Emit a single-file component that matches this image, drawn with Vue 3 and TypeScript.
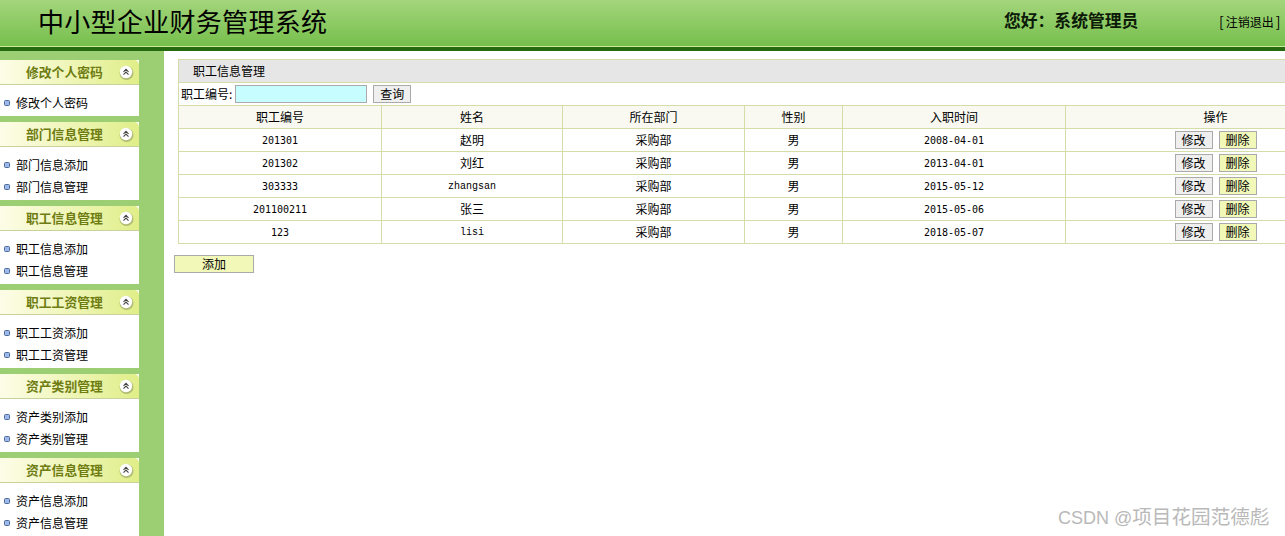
<script setup lang="ts">
import { ref } from "vue";

interface Group {
  title: string,
  items: string[],
}

interface Staff {
  id: string,
  name: string,
  dept: string,
  sex: string,
  date: string,
}

const keyword = ref("");

const groups: Group[] = [
  { title: "修改个人密码", items: ["修改个人密码"] },
  { title: "部门信息管理", items: ["部门信息添加", "部门信息管理"] },
  { title: "职工信息管理", items: ["职工信息添加", "职工信息管理"] },
  { title: "职工工资管理", items: ["职工工资添加", "职工工资管理"] },
  { title: "资产类别管理", items: ["资产类别添加", "资产类别管理"] },
  { title: "资产信息管理", items: ["资产信息添加", "资产信息管理"] },
];

const rows: Staff[] = [
  { id: "201301", name: "赵明", dept: "采购部", sex: "男", date: "2008-04-01" },
  { id: "201302", name: "刘红", dept: "采购部", sex: "男", date: "2013-04-01" },
  { id: "303333", name: "zhangsan", dept: "采购部", sex: "男", date: "2015-05-12" },
  { id: "201100211", name: "张三", dept: "采购部", sex: "男", date: "2015-05-06" },
  { id: "123", name: "lisi", dept: "采购部", sex: "男", date: "2018-05-07" },
];

function isLatin(s: string) {
  return /^[a-z]/i.test(s);
}
</script>

<template>
  <div class="page">
    <div class="header">
      <div class="logo">中小型企业财务管理系统</div>
      <div class="hello">您好：系统管理员</div>
      <div class="logout"><span class="bracket">[</span>注销退出<span class="bracket">]</span></div>
    </div>
    <div class="body">
      <div class="side">
        <div class="group" v-for="g in groups" :key="g.title">
          <div class="group-title">
            <span class="group-name">{{ g.title }}</span>
            <svg class="toggle" width="15" height="15" viewBox="0 0 15 15">
              <circle cx="7.5" cy="8" r="7" fill="#7f8a5a" opacity="0.5" />
              <circle cx="7" cy="7" r="6.2" fill="#fff" />
              <path d="M4.5 6.8 7 4.3 9.500 6.800M4.500 9.600 7 7.100 9.500 9.600" fill="none" stroke="#444" stroke-width="1.100" />
            </svg>
          </div>
          <div class="group-body">
            <div class="link" v-for="item in g.items" :key="item">
              <svg class="dot" width="6" height="6" viewBox="0 0 6 6">
                <rect x="0.5" y="0.5" width="5" height="5" rx="1" fill="#9db9ea" stroke="#4d6a9a" stroke-width="1" />
              </svg>
              <span>{{ item }}</span>
            </div>
          </div>
        </div>
      </div>
      <div class="main">
        <div class="panel">
          <div class="panel-title">职工信息管理</div>
          <div class="search">
            <span class="search-label">职工编号:</span>
            <input class="search-input" v-model="keyword" type="text" />
            <button class="btn search-btn">查询</button>
          </div>
          <table class="grid">
            <colgroup>
              <col class="c1" />
              <col class="c2" />
              <col class="c3" />
              <col class="c4" />
              <col class="c5" />
              <col class="c6" />
            </colgroup>
            <thead>
              <tr>
                <th>职工编号</th>
                <th>姓名</th>
                <th>所在部门</th>
                <th>性别</th>
                <th>入职时间</th>
                <th>操作</th>
              </tr>
            </thead>
            <tbody>
              <tr v-for="r in rows" :key="r.id">
                <td class="num">{{ r.id }}</td>
                <td :class="isLatin(r.name) ? 'latin' : ''">{{ r.name }}</td>
                <td>{{ r.dept }}</td>
                <td>{{ r.sex }}</td>
                <td class="num">{{ r.date }}</td>
                <td class="op-cell">
                  <div class="ops">
                    <button class="btn edit">修改</button>
                    <button class="btn del">删除</button>
                  </div>
                </td>
              </tr>
            </tbody>
          </table>
        </div>
        <button class="btn add">添加</button>
      </div>
    </div>
    <div class="mark"><span class="mark-latin">CSDN @</span>项目花园范德彪</div>
  </div>
</template>

<style>
html, body {
  margin: 0;
  overflow: hidden;
}
</style>

<style scoped>
.page {
  position: relative;
  display: flex;
  flex-direction: column;
  height: 536px;
  overflow: hidden;
  background: #fff;
  color: #000;
  font-family: "Noto Sans CJK SC", sans-serif;
  font-size: 12px;
}

.header {
  display: flex;
  align-items: flex-start;
  flex: none;
  height: 46px;
  background: linear-gradient(#a4d57c, #76bf4c);
  border-bottom: 1px solid #c9ec9c;
  box-shadow: 0 4px 0 #266a10;
  margin-bottom: 4px;
}

.logo {
  margin-left: 38px;
  width: 966px;
  font-size: 26px;
  line-height: 42px;
  letter-spacing: 0.3px;
  white-space: nowrap;
  color: #000;
}

.hello {
  width: 215px;
  font-size: 16.8px;
  font-weight: 700;
  line-height: 40px;
  white-space: nowrap;
  color: #0c1a08;
}

.logout {
  font-size: 12px;
  line-height: 42px;
  white-space: nowrap;
}

.bracket {
  margin: 0 2px 0 0;
  font-size: 14px;
}

.bracket:last-child {
  margin: 0 0 0 2px;
}

.body {
  display: flex;
  flex: 1;
  min-height: 0;
}

.side {
  flex: none;
  width: 139px;
  padding: 9px 25px 0 0;
  background: #9ccf74;
}

.group {
  margin-bottom: 6px;
  background: #fff;
}

.group-title {
  position: relative;
  display: flex;
  align-items: center;
  box-sizing: border-box;
  height: 25px;
  padding-bottom: 2px;
  background: linear-gradient(90deg, #fdfde8, #e0ee88);
  border-top-right-radius: 5px;
  border-bottom: 1px solid #c8d29a;
}

.group-name {
  margin-left: 26px;
  font-size: 12.8px;
  font-weight: 700;
  color: #6e7c12;
}

.toggle {
  position: absolute;
  left: 119px;
  top: 5px;
}

.group-body {
  padding: 6px 0 3px;
}

.link {
  display: flex;
  align-items: center;
  height: 22px;
  padding-left: 4px;
  white-space: nowrap;
}

.dot {
  margin: 2px 6px 0 0;
}

.main {
  flex: 1;
  min-width: 0;
  padding: 8px 0 0 10px;
}

.panel {
  width: 1187px;
  margin-left: 4px;
  border: 1px solid #d4dca8;
  border-right: 0;
  border-bottom: 0;
}

.panel-title {
  height: 22px;
  line-height: 22px;
  padding-left: 14px;
  background: #e6e6e6;
  border-bottom: 1px solid #d4dca8;
}

.search {
  display: flex;
  align-items: center;
  height: 22px;
  padding-left: 2px;
  white-space: nowrap;
}

.search-label {
  padding-bottom: 2px;
}

.search-input {
  box-sizing: border-box;
  width: 132px;
  height: 18px;
  margin-left: 3px;
  padding: 0;
  background: #c8fdff;
  border: 1px solid #aaa;
  outline: none;
}

.btn {
  box-sizing: border-box;
  padding: 0;
  border: 1px solid #aaa;
  border-radius: 0;
  background: #efefef;
  color: #000;
  font-family: inherit;
  font-size: 12px;
  line-height: 16px;
}

.search-btn {
  width: 38px;
  height: 18px;
  margin-left: 6px;
}

.grid {
  width: 1187px;
  table-layout: fixed;
  border-collapse: collapse;
  margin-left: -1px;
}

.c1 {
  width: 203px;
}

.c2 {
  width: 181px;
}

.c3 {
  width: 182px;
}

.c4 {
  width: 98px;
}

.c5 {
  width: 223px;
}

.c6 {
  width: 300px;
}

.grid th,
.grid td {
  height: 20px;
  padding: 0 0 2px;
  text-align: center;
  border: 1px solid #d4dca8;
  font-weight: 400;
}

.grid th {
  background: #f9f9f1;
}

.grid td.op-cell {
  height: 22px;
  padding: 0;
}

.grid td.num {
  height: 22px;
  padding: 0;
  font-family: "DejaVu Sans Mono", monospace;
  font-size: 10px;
}

.grid td.latin {
  height: 21px;
  padding: 1px 0 0;
  font-family: "Liberation Mono", monospace;
  font-size: 10px;
}

.ops {
  display: flex;
  justify-content: center;
  gap: 6px;
}

.edit,
.del {
  width: 38px;
  height: 18px;
}

.del,
.add {
  background: #f2f8b8;
}

.add {
  display: block;
  width: 80px;
  height: 18px;
  margin-top: 11px;
}

.mark {
  position: absolute;
  left: 1058px;
  top: 504px;
  font-size: 19.6px;
  line-height: 24px;
  color: #b9b9b9;
  white-space: nowrap;
}

.mark-latin {
  font-family: "Liberation Sans", sans-serif;
  font-size: 18px;
}
</style>
